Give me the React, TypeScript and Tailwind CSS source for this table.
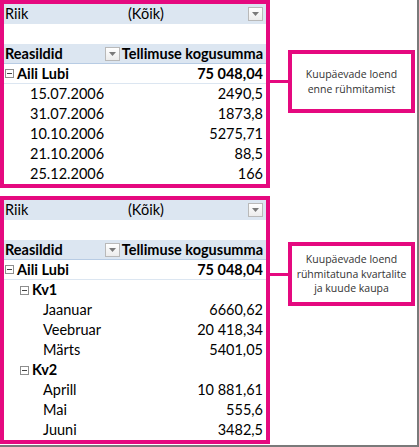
import React from "react";

const PINK = "border-[#e5097f]";

function MinusBox() {
  return (
    <span className="inline-flex w-[9px] h-[9px] border border-[#8e8e8e] bg-white items-center justify-center mr-[3px] shrink-0">
      <span className="w-[5px] h-px bg-[#444]" />
    </span>
  );
}

function DropBtn() {
  return (
    <span className="inline-flex w-[15px] h-[14px] border border-[#b9b9b9] bg-gradient-to-b from-white to-[#ececec] items-center justify-center">
      <svg width="7" height="4" viewBox="0 0 7 4">
        <path d="M0 0 H7 L3.5 4 Z" fill="#7a7a7a" />
      </svg>
    </span>
  );
}

type Row = { label: string; value?: string; level: 0 | 1 | 2 | 3; bold?: boolean; minus?: boolean };

function Pivot({ rows }: { rows: Row[] }) {
  return (
    <div className={`w-[270px] shrink-0 border-4 ${PINK} bg-white text-[14.5px] text-black`} style={{ fontFamily: "Lato, 'Liberation Sans', sans-serif" }}>
      <div className="h-[20px] bg-[#dce6f1] flex items-center pl-[1px] pr-[3px]">
        <span className="w-[123px]">Riik</span>
        <span className="flex-1">(Kõik)</span>
        <DropBtn />
      </div>
      <div className="h-[20px]" />
      <div className="h-[20px] bg-[#dce6f1] flex items-center pl-[1px] pr-[3px] font-bold border-b border-[#b8cce4]">
        <span className="w-[100px]">Reasildid</span>
        <DropBtn />
        <span className="flex-1 text-right">Tellimuse kogusumma</span>
      </div>
      {rows.map((r, i) => (
        <div
          key={i}
          className={`h-[20px] flex items-center pr-[3px] ${r.bold ? "font-bold" : ""} ${r.level === 0 ? "border-b border-[#dce6f1]" : ""} ${
            r.level === 0 ? "pl-[1px]" : r.level === 1 ? "pl-[16px]" : r.level === 2 ? "pl-[26px]" : "pl-[39px]"
          }`}
        >
          {r.minus && <MinusBox />}
          <span className="flex-1">{r.label}</span>
          <span>{r.value}</span>
        </div>
      ))}
    </div>
  );
}

function Callout({ lines, top, height }: { lines: string[]; top: string; height: string }) {
  return (
    <div className={`flex items-center shrink-0 ${top}`}>
      <div className="w-[18px] h-[3px] bg-[#e5097f]" />
      <div
        className={`w-[127px] ${height} border-4 ${PINK} bg-white flex flex-col items-center justify-center text-[10.5px] leading-[14.5px] text-[#333] text-center whitespace-nowrap`}
        style={{ fontFamily: "'Open Sans', 'Noto Sans', sans-serif" }}
      >
        {lines.map((l) => (
          <span key={l}>{l}</span>
        ))}
      </div>
    </div>
  );
}

export default function App() {
  const first: Row[] = [
    { label: "Aili Lubi", value: "75 048,04", level: 0, bold: true, minus: true },
    { label: "15.07.2006", value: "2490,5", level: 2 },
    { label: "31.07.2006", value: "1873,8", level: 2 },
    { label: "10.10.2006", value: "5275,71", level: 2 },
    { label: "21.10.2006", value: "88,5", level: 2 },
    { label: "25.12.2006", value: "166", level: 2 },
  ];
  const second: Row[] = [
    { label: "Aili Lubi", value: "75 048,04", level: 0, bold: true, minus: true },
    { label: "Kv1", level: 1, bold: true, minus: true },
    { label: "Jaanuar", value: "6660,62", level: 3 },
    { label: "Veebruar", value: "20 418,34", level: 3 },
    { label: "Märts", value: "5401,05", level: 3 },
    { label: "Kv2", level: 1, bold: true, minus: true },
    { label: "Aprill", value: "10 881,61", level: 3 },
    { label: "Mai", value: "555,6", level: 3 },
    { label: "Juuni", value: "3482,5", level: 3 },
  ];
  return (
    <div className="w-[419px] h-[447px] bg-white border-r-2 border-b-2 border-[#7a7a7a] flex flex-col gap-[8px] overflow-hidden">
      <div className="flex items-start">
        <Pivot rows={first} />
        <Callout lines={["Kuupäevade loend", "enne rühmitamist"]} top="mt-[50px]" height="h-[63px]" />
      </div>
      <div className="flex items-start">
        <Pivot rows={second} />
        <Callout lines={["Kuupäevade loend", "rühmitatuna kvartalite", "ja kuude kaupa"]} top="mt-[46px]" height="h-[64px]" />
      </div>
    </div>
  );
}
